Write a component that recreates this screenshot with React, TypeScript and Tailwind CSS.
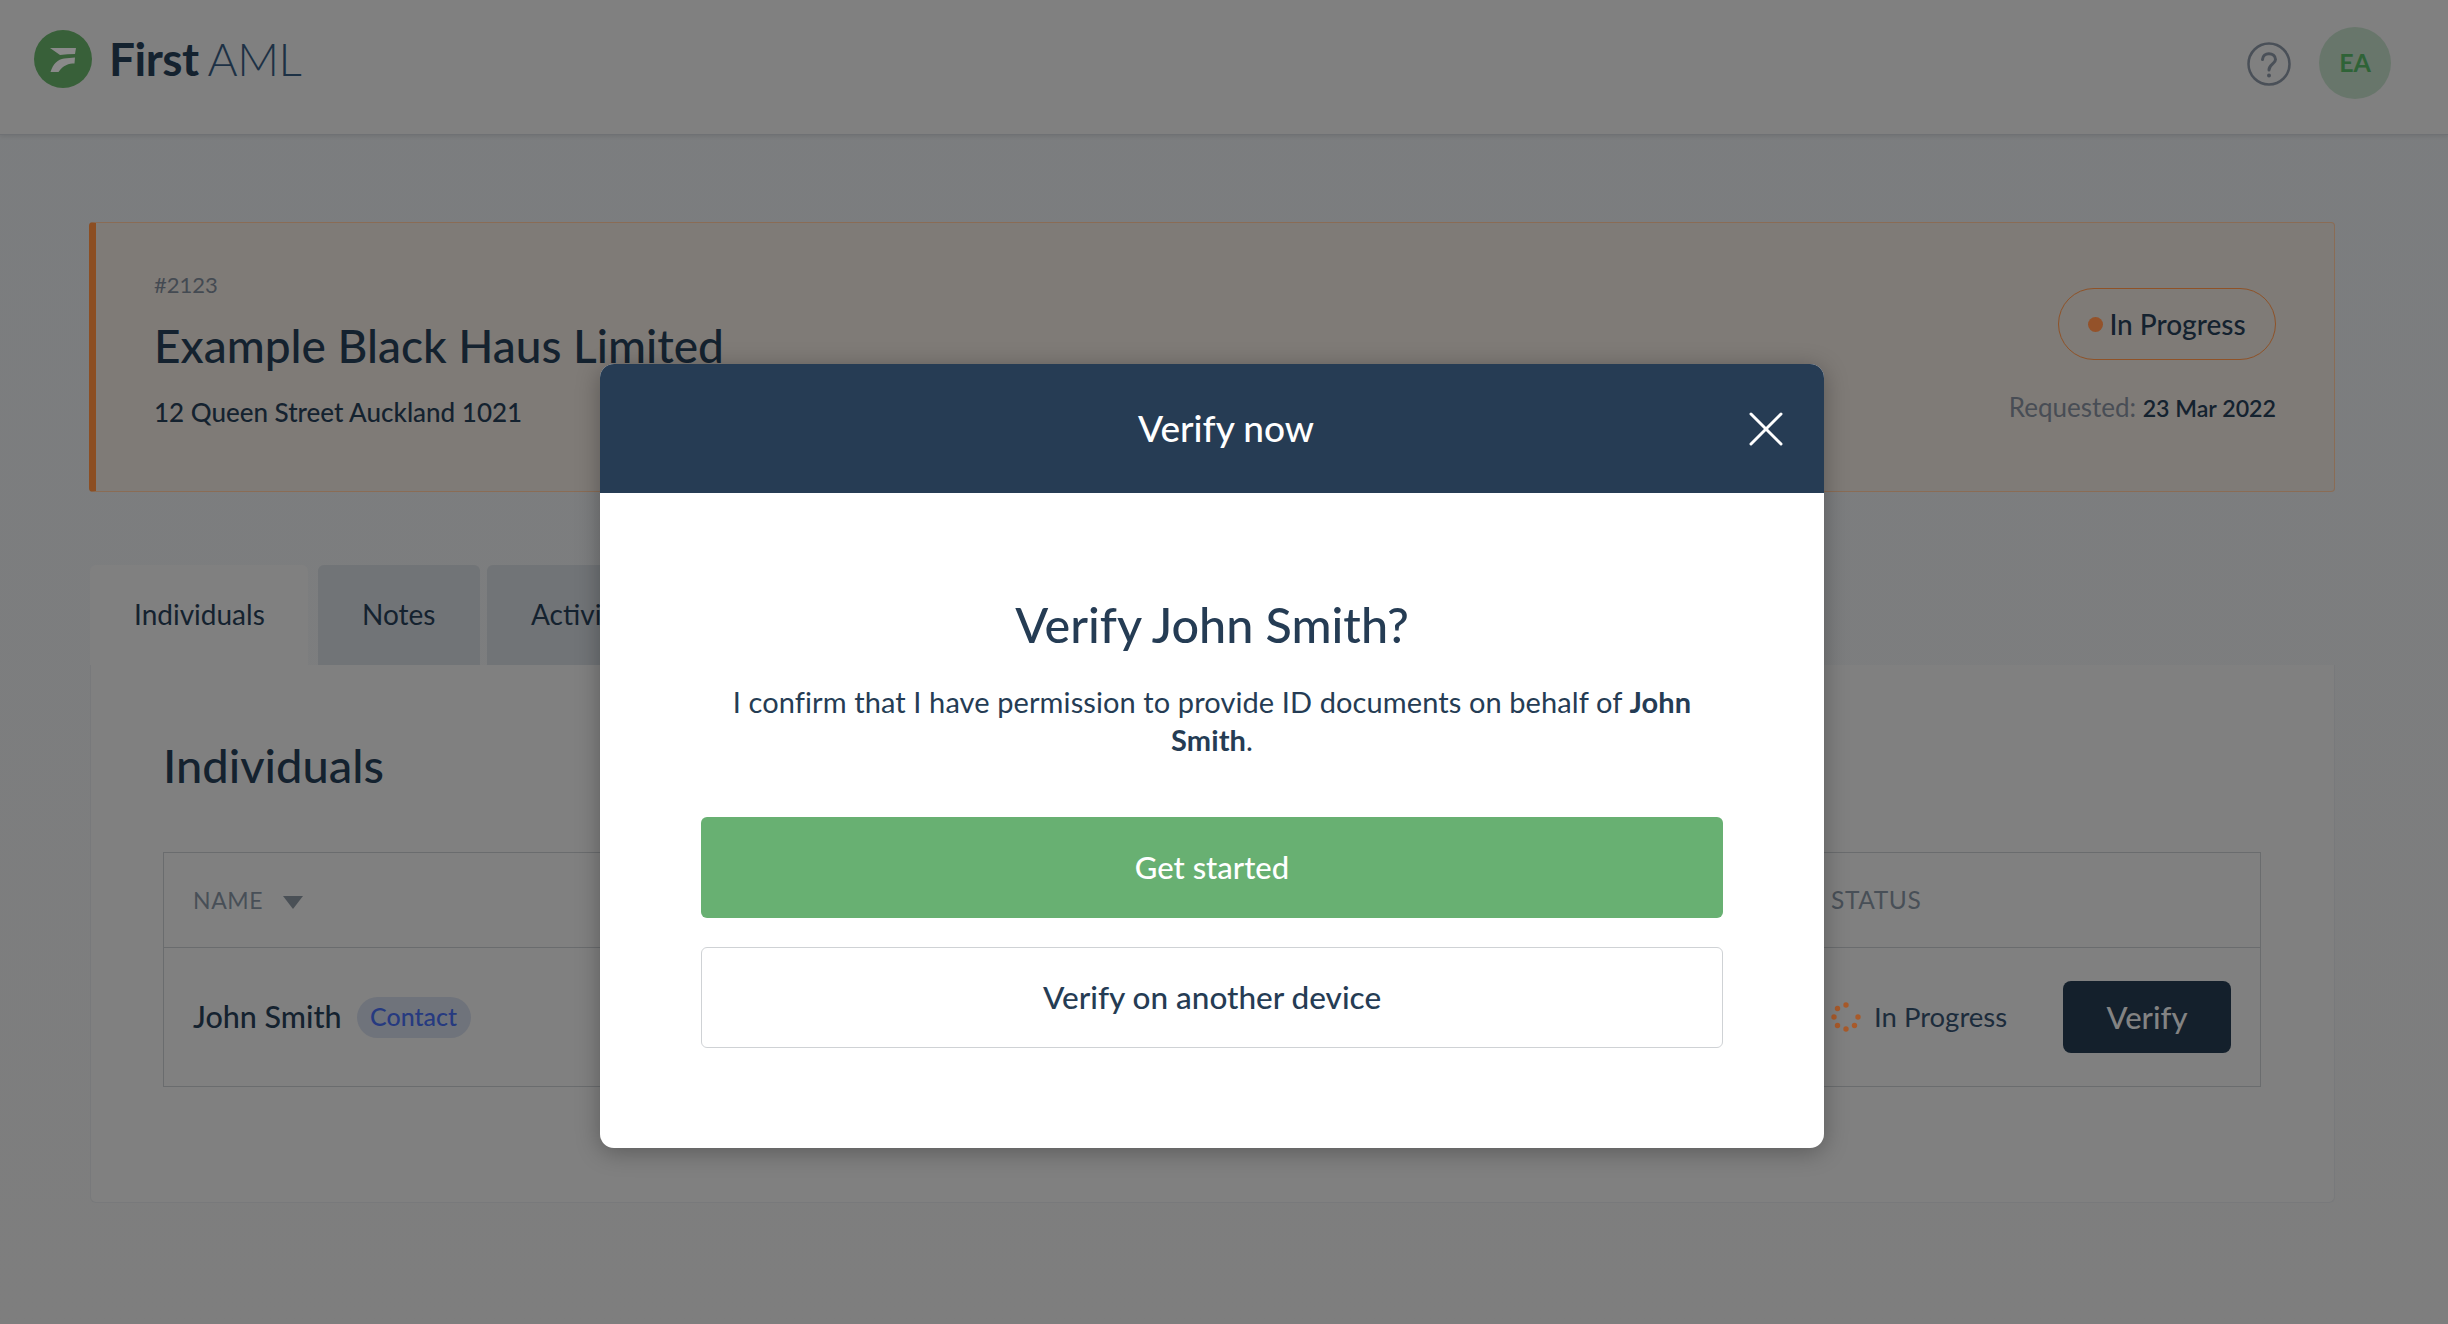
import { X } from "lucide-react";

const spinnerDots = [0, 45, 90, 135, 180, 225, 270];

function Logo() {
  return (
    <div className="flex items-center gap-[17px]">
      <svg width="58" height="58" viewBox="0 0 58 58">
        <circle cx="29" cy="29" r="29" fill="#386039" />
        <path d="M16 18 H42 L41 24 C36 24 31 24.5 26 25 Z" fill="#8a8a8a" />
        <path d="M16.5 42 C19 34 24 29 30 28.5 L41 27.5 L40.5 33.5 C35 33.5 29 35 24.5 42 Z" fill="#8a8a8a" />
      </svg>
      <div className="text-[46px] leading-none text-[#14222f] tracking-[-0.5px]">
        <span className="font-bold">First</span>
        <span className="font-light text-[#1d3145] ml-[9px]">AML</span>
      </div>
    </div>
  );
}

function Spinner() {
  return (
    <svg width="30" height="30" viewBox="-15 -15 30 30">
      {spinnerDots.map((deg) => (
        <circle key={deg} cx={12 * Math.cos((deg * Math.PI) / 180)} cy={12 * Math.sin((deg * Math.PI) / 180)} r="2.7" fill="#a85a2a" />
      ))}
    </svg>
  );
}

function Tab({ label, active, className }: { label: string; active?: boolean; className: string }) {
  return (
    <div className={`h-[100px] rounded-t-[6px] flex items-center pl-[44px] pb-[2px] text-[28px] text-[#14222f] ${active ? "bg-[#808080]" : "bg-[#717477]"} ${className}`}>
      {label}
    </div>
  );
}

export default function App() {
  return (
    <div className="relative h-[1324px] overflow-hidden bg-gradient-to-b from-[#7b7d7f] to-[#7e7e7e] font-['Lato',sans-serif]">
      <header className="h-[135px] bg-[#808080] border-b border-[#6f7174] shadow-[0_2px_4px_rgba(0,0,0,0.08)] flex items-center justify-between pl-[34px] pr-[57px]">
        <div className="-mt-[16px]"><Logo /></div>
        <div className="flex items-center gap-[28px] -mt-[7px]">
          <svg width="44" height="44" viewBox="0 0 44 44" fill="none" stroke="#4a5058" strokeWidth="2.5">
            <circle cx="22" cy="22" r="20.5" />
            <path d="M15.5 17.5 C15.5 9.5 28.5 10 28.5 17.5 C28.5 22 22 22 22 28" strokeLinecap="round" strokeWidth="3" />
            <circle cx="22" cy="33.5" r="2" fill="#4a5058" stroke="none" />
          </svg>
          <div className="w-[72px] h-[72px] rounded-full bg-[#68766b] flex items-center justify-center text-[25px] font-bold text-[#2f6337] -mt-[2px]">EA</div>
        </div>
      </header>

      <main className="pt-[87px] pl-[89px] pr-[113px]">
        <section className="h-[270px] bg-[#7f7b77] border border-[#8a6c55] border-l-[7px] border-l-[#8c4e22] rounded-[4px] flex justify-between pl-[58px] pr-[58px]">
          <div className="pt-[48px]">
            <div className="text-[22px] leading-[28px] text-[#444a52]">#2123</div>
            <h1 className="mt-[19px] text-[46px] leading-[56px] font-medium text-[#14222f]">Example Black Haus Limited</h1>
            <p className="mt-[21px] text-[26px] leading-[34px] font-medium text-[#14222f]">12 Queen Street Auckland 1021</p>
          </div>
          <div className="flex flex-col items-end pt-[65px]">
            <div className="w-[218px] h-[72px] rounded-full border border-[#8f5227] flex items-center justify-center gap-[6px] text-[28px] text-[#14222f] font-medium">
              <span className="w-[15px] h-[15px] rounded-full bg-[#94522a]" />
              In Progress
            </div>
            <div className="mt-[30px] text-[26px] leading-[34px] text-[#484d55]">
              Requested: <span className="text-[23.2px] font-semibold text-[#14222f]">23 Mar 2022</span>
            </div>
          </div>
        </section>

        <div className="mt-[73px] ml-[1px] flex items-end">
          <Tab label="Individuals" active className="w-[218px]" />
          <Tab label="Notes" className="w-[162px] ml-[10px]" />
          <Tab label="Activity" className="w-[160px] ml-[7px]" />
        </div>
        <section className="ml-[1px] h-[538px] bg-[#808080] border border-t-0 border-[#78797b] rounded-b-[6px] pl-[72px] pr-[73px] pt-[70px]">
          <h2 className="text-[47px] leading-[60px] font-medium text-[#14222f]">Individuals</h2>
          <div className="mt-[57px] border border-[#6a6c6e]">
            <div className="h-[95px] grid grid-cols-[1667px_1fr] items-center border-b border-[#6a6c6e] pl-[29px] text-[23px] tracking-[0.6px] text-[#484f57]">
              <div className="flex items-center gap-[20px]">
                NAME
                <span className="w-0 h-0 border-x-[10px] border-x-transparent border-t-[13px] border-t-[#4a5056] mt-[4px]" />
              </div>
              <div className="-ml-[29px] text-[24.5px]">STATUS</div>
            </div>
            <div className="h-[138px] grid grid-cols-[1638px_1fr] items-center pl-[29px] pr-[29px]">
              <div className="flex items-center gap-[15px]">
                <span className="text-[30.5px] font-medium text-[#14222f]">John Smith</span>
                <span className="w-[114px] h-[41px] rounded-full bg-[#6f737b] flex items-center justify-center text-[25px] font-medium text-[#263a80]">Contact</span>
              </div>
              <div className="flex items-center justify-between">
                <div className="flex items-center gap-[13px] text-[27.5px] text-[#1c2c3c]">
                  <Spinner />
                  In Progress
                </div>
                <button className="w-[168px] h-[72px] rounded-[8px] bg-[#14202c] text-[31px] font-medium text-[#838383]">Verify</button>
              </div>
            </div>
          </div>
        </section>
      </main>

      <div className="absolute left-[600px] top-[364px] w-[1224px] h-[784px] bg-white rounded-[14px] overflow-hidden shadow-[0_4px_24px_rgba(0,0,0,0.3)]">
        <div className="h-[129px] bg-[#263c54] flex items-center justify-between px-[28px] text-white">
          <div className="flex-1 text-center text-[37px] font-medium pl-[88px] pb-[2px]">Verify now</div>
          <X size={60} strokeWidth={1.2} />
        </div>
        <div className="px-[101px] pt-[99px] text-center text-[#253c54]">
          <h3 className="text-[48.5px] leading-[64px] font-medium">Verify John Smith?</h3>
          <p className="mt-[27px] text-[29px] leading-[38px] tracking-[0.1px]">
            I confirm that I have permission to provide ID documents on behalf of <b className="font-bold">John<br />Smith</b>.
          </p>
          <button className="mt-[58px] w-full h-[101px] rounded-[6px] bg-[#68b072] text-white text-[31px] font-medium">Get started</button>
          <button className="mt-[29px] w-full h-[101px] rounded-[6px] border border-[#cfd2d5] bg-white text-[31.5px] font-medium">Verify on another device</button>
        </div>
      </div>
    </div>
  );
}
